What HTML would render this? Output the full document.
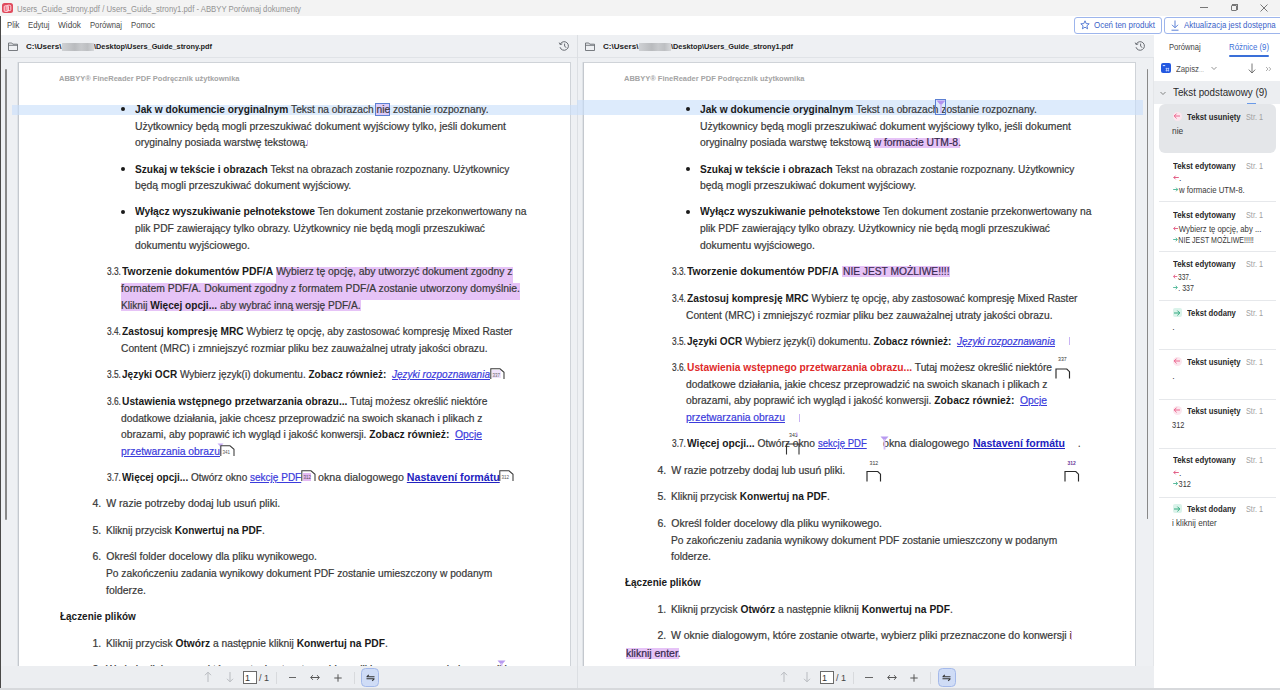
<!DOCTYPE html><html><head><meta charset="utf-8"><style>
*{margin:0;padding:0;box-sizing:border-box}
html,body{width:1280px;height:690px;overflow:hidden;background:#fff;font-family:"Liberation Sans",sans-serif}
.t{position:absolute;white-space:pre;transform-origin:0 0;-webkit-text-stroke:0.2px currentColor}
.t b{font-weight:bold;color:#1a1a1a;-webkit-text-stroke:0}
.lk{color:#3b3bdc;text-decoration:underline;text-decoration-thickness:1px;text-underline-offset:1px}
.lk2{color:#2222c0 !important;text-decoration:underline;text-decoration-thickness:1px;text-underline-offset:1px}
.red{color:#e02a2a !important}
.hl{color:#35284a}
.ar{color:#e0507a}
.ag{color:#3aae8a}
.a{position:absolute}
.sb{background:#888;border-radius:1px}
.hlb{position:absolute;background:#e6c3f7}
.pgicon{position:absolute}
.sep{position:absolute;left:1158.5px;width:117.5px;height:1px;background:#e6e8eb}
.tbi{position:absolute;font-size:11px;color:#555;line-height:11px}
</style></head><body><!-- title bar -->
<div class="a" style="left:0;top:0;width:1280px;height:16px;background:#f3f3f3"></div>
<div class="a" style="left:2.2px;top:2.5px;width:10.5px;height:10.3px;background:#e04a5c;border-radius:2.5px"></div>
<svg class="a" style="left:2px;top:2.5px" width="11" height="11" viewBox="0 0 11 11"><rect x="2.2" y="2.8" width="4.2" height="5.6" rx="1" stroke="#ffd6de" stroke-width="1" fill="#f07a8a"/><rect x="5" y="2.2" width="3.8" height="5.4" rx="1" stroke="#ffd6de" stroke-width="1" fill="none"/></svg>
<div class="a" style="left:1200px;top:7px;width:7.5px;height:1px;background:#777"></div>
<div class="a" style="left:1230.5px;top:5px;width:6px;height:6px;border:1px solid #777;border-radius:1px"></div>
<div class="a" style="left:1232px;top:4px;width:5.5px;height:5.5px;border-top:1px solid #777;border-right:1px solid #777"></div>
<svg class="a" style="left:1260px;top:4px" width="8" height="8" viewBox="0 0 8 8"><path d="M0.5 0.5L7.5 7.5M7.5 0.5L0.5 7.5" stroke="#777" stroke-width="1"/></svg>
<!-- menu bar -->
<div class="a" style="left:0;top:16px;width:1280px;height:19px;background:#fff"></div>
<div class="a" style="left:1073.5px;top:16.5px;width:88px;height:17px;border:1px solid #9db5ec;border-radius:3px;background:#fff"></div>
<svg class="a" style="left:1080px;top:20px" width="10" height="10" viewBox="0 0 10 10"><path d="M5 0.8L6.2 3.6L9.2 3.8L6.9 5.8L7.6 8.8L5 7.2L2.4 8.8L3.1 5.8L0.8 3.8L3.8 3.6Z" stroke="#4a72d0" stroke-width="0.9" fill="none" stroke-linejoin="round"/></svg>
<div class="a" style="left:1164px;top:16.5px;width:120px;height:17px;border:1px solid #9db5ec;border-radius:3px;background:#fff"></div>
<svg class="a" style="left:1171px;top:19.5px" width="8" height="11" viewBox="0 0 8 11"><path d="M4 0.5V7.5M1 4.8L4 7.8L7 4.8M0.5 10.2H7.5" stroke="#4a72d0" stroke-width="0.9" fill="none"/></svg>
<!-- left border -->
<div class="a" style="left:0;top:16px;width:1px;height:674px;background:#4a4948"></div>
<!-- pane headers -->
<div class="a" style="left:1px;top:35px;width:1153px;height:22px;background:#eef0f3"></div>
<div class="a" style="left:1px;top:57px;width:1153px;height:1px;background:#e0e3e7"></div>
<!-- doc backgrounds -->
<div class="a" style="left:1px;top:58px;width:1153px;height:632px;background:#eef0f3"></div>
<div class="a" style="left:577px;top:35px;width:1px;height:653px;background:#dcdfe3"></div>
<!-- pages -->
<div class="a" style="left:18px;top:62px;width:553px;height:610px;background:#fff;border:1px solid #cfd3d8;border-left-color:#c4c8ce;border-bottom:none;box-shadow:-1px 0 0 #dfe3e7"></div>
<div class="a" style="left:583px;top:62px;width:553px;height:610px;background:#fff;border:1px solid #cfd3d8;border-left-color:#c4c8ce;border-bottom:none;box-shadow:-1px 0 0 #dfe3e7"></div>
<!-- scrollbars -->
<div class="a sb" style="left:5.2px;top:69px;width:1.9px;height:450.5px"></div>
<div class="a sb" style="left:1146.5px;top:69px;width:1.8px;height:450px"></div>
<!-- folder icons -->
<svg class="a" style="left:8px;top:42px" width="10" height="9" viewBox="0 0 10 9"><path d="M0.5 1H3.8L4.8 2.2H9.5V8.5H0.5Z M0.5 3.3H9.5" stroke="#6a6e74" stroke-width="0.9" fill="none"/></svg>
<svg class="a" style="left:585px;top:42px" width="10" height="9" viewBox="0 0 10 9"><path d="M0.5 1H3.8L4.8 2.2H9.5V8.5H0.5Z M0.5 3.3H9.5" stroke="#6a6e74" stroke-width="0.9" fill="none"/></svg>
<div class="a" style="left:61.5px;top:42.5px;width:32px;height:8.5px;background:linear-gradient(90deg,#cfd1d4,#b9bbbe 40%,#c7c9cc 60%,#bdbfc2 80%,#d5d7da)"></div>
<div class="a" style="left:638.5px;top:42.5px;width:32px;height:8.5px;background:linear-gradient(90deg,#cfd1d4,#b9bbbe 40%,#c7c9cc 60%,#bdbfc2 80%,#d5d7da)"></div>
<!-- history icons -->
<svg class="a" style="left:558px;top:40px" width="12" height="12" viewBox="0 0 12 12"><path d="M2.2 4.2A4.3 4.3 0 1 1 2 7.2M1.2 2.6L2.2 4.6L4.3 3.9M6.6 3.6V6.3L8.4 7.6" stroke="#6a6e74" stroke-width="1" fill="none"/></svg>
<svg class="a" style="left:1134px;top:40px" width="12" height="12" viewBox="0 0 12 12"><path d="M2.2 4.2A4.3 4.3 0 1 1 2 7.2M1.2 2.6L2.2 4.6L4.3 3.9M6.6 3.6V6.3L8.4 7.6" stroke="#6a6e74" stroke-width="1" fill="none"/></svg>
<!-- highlight bands -->
<div class="a" style="left:12px;top:104.6px;width:565px;height:10px;background:rgba(200,222,250,0.62)"></div>
<div class="a" style="left:577px;top:100.2px;width:566px;height:14.5px;background:rgba(200,222,250,0.62)"></div>
<!-- purple highlights -->
<div class="hlb" style="left:375px;top:103px;width:15px;height:13px;border:1px solid #5c80d2;background:#dcccf8"></div>
<div class="hlb" style="left:276.3px;top:267px;width:236.7px;height:16px"></div>
<div class="hlb" style="left:120.5px;top:283px;width:399.5px;height:17px"></div>
<div class="hlb" style="left:120.5px;top:300px;width:240px;height:10.5px"></div>
<div class="hlb" style="left:873.7px;top:137.5px;width:86.8px;height:10.8px"></div>
<div class="hlb" style="left:842px;top:266.3px;width:108px;height:10.8px"></div>
<div class="hlb" style="left:626.2px;top:647.5px;width:52.5px;height:11.3px"></div>
<!-- sidebar -->
<div class="a" style="left:1153px;top:58px;width:1px;height:632px;background:#e4e6e9"></div>
<div class="a" style="left:1154px;top:35px;width:126px;height:655px;background:#fff"></div>
<div class="a" style="left:1229px;top:55.3px;width:40px;height:1.6px;background:#3a6fd8;border-radius:1px"></div>
<div class="a" style="left:1160.7px;top:63.3px;width:10px;height:9.8px;background:#2358e0;border-radius:2px"></div>
<svg class="a" style="left:1160.7px;top:63.3px" width="10" height="10" viewBox="0 0 10 10"><path d="M1.8 2.6h2.4" stroke="#dfe8ff" stroke-width="1"/><path d="M4.6 5.6h3.6M4.6 7.6h3.6M5.5 4.8v3.6M7.4 4.8v3.6" stroke="#c8d6ff" stroke-width="0.7"/></svg>
<svg class="a" style="left:1211px;top:66px" width="6" height="5" viewBox="0 0 6 5"><path d="M0.5 1L3 3.5L5.5 1" stroke="#888" stroke-width="0.9" fill="none"/></svg>
<svg class="a" style="left:1248px;top:63px" width="8" height="11" viewBox="0 0 8 11"><path d="M4 0.5V10M0.8 6.6L4 10L7.2 6.6" stroke="#666" stroke-width="0.9" fill="none"/></svg>
<svg class="a" style="left:1265px;top:65.5px" width="7" height="6" viewBox="0 0 7 6"><path d="M1 1L3 3L1 5M3.8 1L5.8 3L3.8 5" stroke="#9a9a9a" stroke-width="0.8" fill="none"/></svg>
<div class="a" style="left:1154px;top:81px;width:126px;height:23px;background:#eceef1"></div>
<svg class="a" style="left:1160px;top:90.5px" width="6" height="5" viewBox="0 0 6 5"><path d="M0.5 1L3 3.5L5.5 1" stroke="#777" stroke-width="0.9" fill="none"/></svg>
<div class="a" style="left:1247px;top:103px;width:9px;height:1.5px;background:#6a9ae8"></div>
<div class="a" style="left:1159px;top:104.4px;width:117px;height:48.5px;background:#e4e6e9;border-radius:6px"></div>
<div class="sep" style="top:201px"></div>
<div class="sep" style="top:250.5px"></div>
<div class="sep" style="top:299.8px"></div>
<div class="sep" style="top:349.2px"></div>
<div class="sep" style="top:398.5px"></div>
<div class="sep" style="top:447.5px"></div>
<div class="sep" style="top:496.5px"></div>
<div class="t" style="left:17.00px;top:4.00px;font-size:9.6px;line-height:9.6px;color:#949494;font-weight:normal;transform:scaleX(0.8077);-webkit-text-stroke:0;">Users_Guide_strony.pdf / Users_Guide_strony1.pdf - ABBYY Porównaj dokumenty</div>
<div class="t" style="left:6.50px;top:21.00px;font-size:9px;line-height:9px;color:#4a4a4a;font-weight:normal;transform:scaleX(0.8611);-webkit-text-stroke:0;">Plik</div>
<div class="t" style="left:27.50px;top:21.00px;font-size:9px;line-height:9px;color:#4a4a4a;font-weight:normal;transform:scaleX(0.8595);-webkit-text-stroke:0;">Edytuj</div>
<div class="t" style="left:57.50px;top:21.00px;font-size:9px;line-height:9px;color:#4a4a4a;font-weight:normal;transform:scaleX(0.9194);-webkit-text-stroke:0;">Widok</div>
<div class="t" style="left:89.50px;top:21.00px;font-size:9px;line-height:9px;color:#4a4a4a;font-weight:normal;transform:scaleX(0.8526);-webkit-text-stroke:0;">Porównaj</div>
<div class="t" style="left:131.00px;top:21.00px;font-size:9px;line-height:9px;color:#4a4a4a;font-weight:normal;transform:scaleX(0.8567);-webkit-text-stroke:0;">Pomoc</div>
<div class="t" style="left:1094.00px;top:21.00px;font-size:9px;line-height:9px;color:#3a62c8;font-weight:normal;transform:scaleX(0.8835);-webkit-text-stroke:0;">Oceń ten produkt</div>
<div class="t" style="left:1184.00px;top:21.00px;font-size:9px;line-height:9px;color:#3a62c8;font-weight:normal;transform:scaleX(0.8812);-webkit-text-stroke:0;">Aktualizacja jest dostępna</div>
<div class="t" style="left:25.50px;top:43.00px;font-size:8px;line-height:8px;color:#222;font-weight:bold;transform:scaleX(1.0107);-webkit-text-stroke:0;">C:\Users\</div>
<div class="t" style="left:94.00px;top:43.00px;font-size:8px;line-height:8px;color:#222;font-weight:bold;transform:scaleX(0.9195);-webkit-text-stroke:0;">\Desktop\Users_Guide_strony.pdf</div>
<div class="t" style="left:602.60px;top:43.00px;font-size:8px;line-height:8px;color:#222;font-weight:bold;transform:scaleX(1.0078);-webkit-text-stroke:0;">C:\Users\</div>
<div class="t" style="left:671.00px;top:43.00px;font-size:8px;line-height:8px;color:#222;font-weight:bold;transform:scaleX(0.9147);-webkit-text-stroke:0;">\Desktop\Users_Guide_strony1.pdf</div>
<div class="t" style="left:59.00px;top:75.00px;font-size:8px;line-height:8px;color:#a4a4a4;font-weight:bold;transform:scaleX(0.9371);-webkit-text-stroke:0;">ABBYY® FineReader PDF Podręcznik użytkownika</div>
<div class="t" style="left:134.50px;top:104.00px;font-size:10.5px;line-height:10.5px;color:#383838;font-weight:normal;transform:scaleX(0.9701);"><b>Jak w dokumencie oryginalnym</b> Tekst na obrazach nie zostanie rozpoznany.</div>
<div class="t" style="left:134.50px;top:121.00px;font-size:10.5px;line-height:10.5px;color:#383838;font-weight:normal;transform:scaleX(0.9902);">Użytkownicy będą mogli przeszukiwać dokument wyjściowy tylko, jeśli dokument</div>
<div class="t" style="left:134.50px;top:137.00px;font-size:10.5px;line-height:10.5px;color:#383838;font-weight:normal;transform:scaleX(0.9815);">oryginalny posiada warstwę tekstową.</div>
<div class="t" style="left:134.50px;top:164.00px;font-size:10.5px;line-height:10.5px;color:#383838;font-weight:normal;transform:scaleX(0.9638);"><b>Szukaj w tekście i obrazach</b> Tekst na obrazach zostanie rozpoznany. Użytkownicy</div>
<div class="t" style="left:134.50px;top:180.00px;font-size:10.5px;line-height:10.5px;color:#383838;font-weight:normal;transform:scaleX(0.9917);">będą mogli przeszukiwać dokument wyjściowy.</div>
<div class="t" style="left:134.50px;top:206.00px;font-size:10.5px;line-height:10.5px;color:#383838;font-weight:normal;transform:scaleX(0.9802);"><b>Wyłącz wyszukiwanie pełnotekstowe</b> Ten dokument zostanie przekonwertowany na</div>
<div class="t" style="left:134.50px;top:223.00px;font-size:10.5px;line-height:10.5px;color:#383838;font-weight:normal;transform:scaleX(0.9806);">plik PDF zawierający tylko obrazy. Użytkownicy nie będą mogli przeszukiwać</div>
<div class="t" style="left:134.50px;top:240.00px;font-size:10.5px;line-height:10.5px;color:#383838;font-weight:normal;transform:scaleX(0.9851);">dokumentu wyjściowego.</div>
<div class="t" style="left:107.00px;top:266.00px;font-size:10.5px;line-height:10.5px;color:#383838;font-weight:normal;transform:scaleX(0.7936);">3.3.</div>
<div class="t" style="left:122.00px;top:266.00px;font-size:10.5px;line-height:10.5px;color:#383838;font-weight:normal;transform:scaleX(0.9907);"><b>Tworzenie dokumentów PDF/A</b> Wybierz tę opcję, aby utworzyć dokument zgodny z</div>
<div class="t" style="left:120.50px;top:283.00px;font-size:10.5px;line-height:10.5px;color:#383838;font-weight:normal;transform:scaleX(0.9895);">formatem PDF/A. Dokument zgodny z formatem PDF/A zostanie utworzony domyślnie.</div>
<div class="t" style="left:120.50px;top:300.00px;font-size:10.5px;line-height:10.5px;color:#383838;font-weight:normal;transform:scaleX(0.9638);">Kliknij <b>Więcej opcji...</b> aby wybrać inną wersję PDF/A.</div>
<div class="t" style="left:107.00px;top:326.00px;font-size:10.5px;line-height:10.5px;color:#383838;font-weight:normal;transform:scaleX(0.7936);">3.4.</div>
<div class="t" style="left:122.00px;top:326.00px;font-size:10.5px;line-height:10.5px;color:#383838;font-weight:normal;transform:scaleX(0.9700);"><b>Zastosuj kompresję MRC</b> Wybierz tę opcję, aby zastosować kompresję Mixed Raster</div>
<div class="t" style="left:120.50px;top:343.00px;font-size:10.5px;line-height:10.5px;color:#383838;font-weight:normal;transform:scaleX(0.9768);">Content (MRC) i zmniejszyć rozmiar pliku bez zauważalnej utraty jakości obrazu.</div>
<div class="t" style="left:107.00px;top:369.00px;font-size:10.5px;line-height:10.5px;color:#383838;font-weight:normal;transform:scaleX(0.7936);">3.5.</div>
<div class="t" style="left:122.00px;top:369.00px;font-size:10.5px;line-height:10.5px;color:#383838;font-weight:normal;transform:scaleX(0.9542);"><b>Języki OCR</b> Wybierz język(i) dokumentu. <b>Zobacz również:</b>  <i class="lk">Języki rozpoznawania</i></div>
<div class="t" style="left:107.00px;top:396.00px;font-size:10.5px;line-height:10.5px;color:#383838;font-weight:normal;transform:scaleX(0.7936);">3.6.</div>
<div class="t" style="left:122.00px;top:396.00px;font-size:10.5px;line-height:10.5px;color:#383838;font-weight:normal;transform:scaleX(0.9756);"><b>Ustawienia wstępnego przetwarzania obrazu...</b> Tutaj możesz określić niektóre</div>
<div class="t" style="left:120.50px;top:413.00px;font-size:10.5px;line-height:10.5px;color:#383838;font-weight:normal;transform:scaleX(0.9785);">dodatkowe działania, jakie chcesz przeprowadzić na swoich skanach i plikach z</div>
<div class="t" style="left:120.50px;top:429.00px;font-size:10.5px;line-height:10.5px;color:#383838;font-weight:normal;transform:scaleX(0.9803);">obrazami, aby poprawić ich wygląd i jakość konwersji. <b>Zobacz również:</b>  <span class="lk">Opcje</span></div>
<div class="t" style="left:120.50px;top:446.00px;font-size:10.5px;line-height:10.5px;color:#383838;font-weight:normal;transform:scaleX(0.9861);"><span class="lk">przetwarzania obrazu</span></div>
<div class="t" style="left:107.00px;top:472.00px;font-size:10.5px;line-height:10.5px;color:#383838;font-weight:normal;transform:scaleX(0.7936);">3.7.</div>
<div class="t" style="left:122.00px;top:472.00px;font-size:10.5px;line-height:10.5px;color:#383838;font-weight:normal;transform:scaleX(0.9544);"><b>Więcej opcji...</b> Otwórz okno <span class="lk">sekcję PDF</span></div>
<div class="t" style="left:317.50px;top:472.00px;font-size:10.5px;line-height:10.5px;color:#383838;font-weight:normal;transform:scaleX(1.0143);">okna dialogowego <b class="lk2">Nastavení formátu</b></div>
<div class="t" style="left:92.50px;top:498.00px;font-size:10.5px;line-height:10.5px;color:#383838;font-weight:normal;">4.</div>
<div class="t" style="left:106.25px;top:498.00px;font-size:10.5px;line-height:10.5px;color:#383838;font-weight:normal;">W razie potrzeby dodaj lub usuń pliki.</div>
<div class="t" style="left:92.50px;top:525.00px;font-size:10.5px;line-height:10.5px;color:#383838;font-weight:normal;">5.</div>
<div class="t" style="left:106.25px;top:525.00px;font-size:10.5px;line-height:10.5px;color:#383838;font-weight:normal;transform:scaleX(0.9649);">Kliknij przycisk <b>Konwertuj na PDF</b>.</div>
<div class="t" style="left:92.50px;top:551.00px;font-size:10.5px;line-height:10.5px;color:#383838;font-weight:normal;">6.</div>
<div class="t" style="left:106.25px;top:551.00px;font-size:10.5px;line-height:10.5px;color:#383838;font-weight:normal;">Określ folder docelowy dla pliku wynikowego.</div>
<div class="t" style="left:106.25px;top:568.00px;font-size:10.5px;line-height:10.5px;color:#383838;font-weight:normal;transform:scaleX(0.9732);">Po zakończeniu zadania wynikowy dokument PDF zostanie umieszczony w podanym</div>
<div class="t" style="left:106.25px;top:585.00px;font-size:10.5px;line-height:10.5px;color:#383838;font-weight:normal;transform:scaleX(0.9930);">folderze.</div>
<div class="t" style="left:60.00px;top:611.00px;font-size:10.5px;line-height:10.5px;color:#383838;font-weight:normal;transform:scaleX(0.9474);"><b>Łączenie plików</b></div>
<div class="t" style="left:92.50px;top:638.00px;font-size:10.5px;line-height:10.5px;color:#383838;font-weight:normal;">1.</div>
<div class="t" style="left:106.25px;top:638.00px;font-size:10.5px;line-height:10.5px;color:#383838;font-weight:normal;transform:scaleX(0.9754);">Kliknij przycisk <b>Otwórz</b> a następnie kliknij <b>Konwertuj na PDF</b>.</div>
<div class="t" style="left:92.50px;top:664.00px;font-size:10.5px;line-height:10.5px;color:#383838;font-weight:normal;">2.</div>
<div class="t" style="left:106.25px;top:664.00px;font-size:10.5px;line-height:10.5px;color:#383838;font-weight:normal;transform:scaleX(0.9967);">W oknie dialogowym, które zostanie otwarte, wybierz pliki przeznaczone do konwersji i</div>
<div class="t" style="left:624.00px;top:75.00px;font-size:8px;line-height:8px;color:#a4a4a4;font-weight:bold;transform:scaleX(0.9371);-webkit-text-stroke:0;">ABBYY® FineReader PDF Podręcznik użytkownika</div>
<div class="t" style="left:699.50px;top:104.00px;font-size:10.5px;line-height:10.5px;color:#383838;font-weight:normal;transform:scaleX(0.9692);"><b>Jak w dokumencie oryginalnym</b> Tekst na obrazach zostanie rozpoznany.</div>
<div class="t" style="left:699.50px;top:121.00px;font-size:10.5px;line-height:10.5px;color:#383838;font-weight:normal;transform:scaleX(0.9902);">Użytkownicy będą mogli przeszukiwać dokument wyjściowy tylko, jeśli dokument</div>
<div class="t" style="left:699.50px;top:137.00px;font-size:10.5px;line-height:10.5px;color:#383838;font-weight:normal;transform:scaleX(0.9851);">oryginalny posiada warstwę tekstową <span class="hl">w formacie UTM-8</span>.</div>
<div class="t" style="left:699.50px;top:164.00px;font-size:10.5px;line-height:10.5px;color:#383838;font-weight:normal;transform:scaleX(0.9638);"><b>Szukaj w tekście i obrazach</b> Tekst na obrazach zostanie rozpoznany. Użytkownicy</div>
<div class="t" style="left:699.50px;top:180.00px;font-size:10.5px;line-height:10.5px;color:#383838;font-weight:normal;transform:scaleX(0.9917);">będą mogli przeszukiwać dokument wyjściowy.</div>
<div class="t" style="left:699.50px;top:206.00px;font-size:10.5px;line-height:10.5px;color:#383838;font-weight:normal;transform:scaleX(0.9802);"><b>Wyłącz wyszukiwanie pełnotekstowe</b> Ten dokument zostanie przekonwertowany na</div>
<div class="t" style="left:699.50px;top:223.00px;font-size:10.5px;line-height:10.5px;color:#383838;font-weight:normal;transform:scaleX(0.9806);">plik PDF zawierający tylko obrazy. Użytkownicy nie będą mogli przeszukiwać</div>
<div class="t" style="left:699.50px;top:240.00px;font-size:10.5px;line-height:10.5px;color:#383838;font-weight:normal;transform:scaleX(0.9851);">dokumentu wyjściowego.</div>
<div class="t" style="left:672.00px;top:266.00px;font-size:10.5px;line-height:10.5px;color:#383838;font-weight:normal;transform:scaleX(0.7936);">3.3.</div>
<div class="t" style="left:687.00px;top:266.00px;font-size:10.5px;line-height:10.5px;color:#383838;font-weight:normal;transform:scaleX(0.9941);"><b>Tworzenie dokumentów PDF/A</b></div>
<div class="t" style="left:842.50px;top:267.00px;font-size:10.3px;line-height:10.3px;color:#3a2a50;font-weight:normal;transform:scaleX(0.9919);">NIE JEST MOŻLIWE!!!!</div>
<div class="t" style="left:672.00px;top:293.00px;font-size:10.5px;line-height:10.5px;color:#383838;font-weight:normal;transform:scaleX(0.7936);">3.4.</div>
<div class="t" style="left:687.00px;top:293.00px;font-size:10.5px;line-height:10.5px;color:#383838;font-weight:normal;transform:scaleX(0.9700);"><b>Zastosuj kompresję MRC</b> Wybierz tę opcję, aby zastosować kompresję Mixed Raster</div>
<div class="t" style="left:685.50px;top:310.00px;font-size:10.5px;line-height:10.5px;color:#383838;font-weight:normal;transform:scaleX(0.9768);">Content (MRC) i zmniejszyć rozmiar pliku bez zauważalnej utraty jakości obrazu.</div>
<div class="t" style="left:672.00px;top:336.00px;font-size:10.5px;line-height:10.5px;color:#383838;font-weight:normal;transform:scaleX(0.7936);">3.5.</div>
<div class="t" style="left:687.00px;top:336.00px;font-size:10.5px;line-height:10.5px;color:#383838;font-weight:normal;transform:scaleX(0.9542);"><b>Języki OCR</b> Wybierz język(i) dokumentu. <b>Zobacz również:</b>  <i class="lk">Języki rozpoznawania</i></div>
<div class="t" style="left:672.00px;top:362.00px;font-size:10.5px;line-height:10.5px;color:#383838;font-weight:normal;transform:scaleX(0.7936);">3.6.</div>
<div class="t" style="left:687.00px;top:362.00px;font-size:10.5px;line-height:10.5px;color:#383838;font-weight:normal;transform:scaleX(0.9743);"><b class="red">Ustawienia wstępnego przetwarzania obrazu...</b> Tutaj możesz określić niektóre</div>
<div class="t" style="left:685.50px;top:379.00px;font-size:10.5px;line-height:10.5px;color:#383838;font-weight:normal;transform:scaleX(0.9785);">dodatkowe działania, jakie chcesz przeprowadzić na swoich skanach i plikach z</div>
<div class="t" style="left:685.50px;top:395.00px;font-size:10.5px;line-height:10.5px;color:#383838;font-weight:normal;transform:scaleX(0.9803);">obrazami, aby poprawić ich wygląd i jakość konwersji. <b>Zobacz również:</b>  <span class="lk">Opcje</span></div>
<div class="t" style="left:685.50px;top:412.00px;font-size:10.5px;line-height:10.5px;color:#383838;font-weight:normal;transform:scaleX(0.9861);"><span class="lk">przetwarzania obrazu</span></div>
<div class="t" style="left:672.00px;top:438.00px;font-size:10.5px;line-height:10.5px;color:#383838;font-weight:normal;transform:scaleX(0.7936);">3.7.</div>
<div class="t" style="left:687.00px;top:438.00px;font-size:10.5px;line-height:10.5px;color:#383838;font-weight:normal;transform:scaleX(0.9756);"><b>Więcej opcji...</b> Otwórz okno</div>
<div class="t" style="left:817.50px;top:438.00px;font-size:10.5px;line-height:10.5px;color:#383838;font-weight:normal;transform:scaleX(0.9080);"><span class="lk">sekcję PDF</span></div>
<div class="t" style="left:882.50px;top:438.00px;font-size:10.5px;line-height:10.5px;color:#383838;font-weight:normal;transform:scaleX(1.0188);">okna dialogowego</div>
<div class="t" style="left:972.50px;top:438.00px;font-size:10.5px;line-height:10.5px;color:#383838;font-weight:normal;transform:scaleX(1.0043);"><b class="lk2">Nastavení formátu</b></div>
<div class="t" style="left:1077.50px;top:438.00px;font-size:10.5px;line-height:10.5px;color:#383838;font-weight:normal;transform:scaleX(0.8556);">.</div>
<div class="t" style="left:657.50px;top:465.00px;font-size:10.5px;line-height:10.5px;color:#383838;font-weight:normal;">4.</div>
<div class="t" style="left:671.25px;top:465.00px;font-size:10.5px;line-height:10.5px;color:#383838;font-weight:normal;">W razie potrzeby dodaj lub usuń pliki.</div>
<div class="t" style="left:657.50px;top:491.00px;font-size:10.5px;line-height:10.5px;color:#383838;font-weight:normal;">5.</div>
<div class="t" style="left:671.25px;top:491.00px;font-size:10.5px;line-height:10.5px;color:#383838;font-weight:normal;transform:scaleX(0.9649);">Kliknij przycisk <b>Konwertuj na PDF</b>.</div>
<div class="t" style="left:657.50px;top:518.00px;font-size:10.5px;line-height:10.5px;color:#383838;font-weight:normal;">6.</div>
<div class="t" style="left:671.25px;top:518.00px;font-size:10.5px;line-height:10.5px;color:#383838;font-weight:normal;">Określ folder docelowy dla pliku wynikowego.</div>
<div class="t" style="left:671.25px;top:535.00px;font-size:10.5px;line-height:10.5px;color:#383838;font-weight:normal;transform:scaleX(0.9732);">Po zakończeniu zadania wynikowy dokument PDF zostanie umieszczony w podanym</div>
<div class="t" style="left:671.25px;top:551.00px;font-size:10.5px;line-height:10.5px;color:#383838;font-weight:normal;transform:scaleX(0.9930);">folderze.</div>
<div class="t" style="left:625.00px;top:577.00px;font-size:10.5px;line-height:10.5px;color:#383838;font-weight:normal;transform:scaleX(0.9474);"><b>Łączenie plików</b></div>
<div class="t" style="left:657.50px;top:604.00px;font-size:10.5px;line-height:10.5px;color:#383838;font-weight:normal;">1.</div>
<div class="t" style="left:671.25px;top:604.00px;font-size:10.5px;line-height:10.5px;color:#383838;font-weight:normal;transform:scaleX(0.9754);">Kliknij przycisk <b>Otwórz</b> a następnie kliknij <b>Konwertuj na PDF</b>.</div>
<div class="t" style="left:657.50px;top:630.00px;font-size:10.5px;line-height:10.5px;color:#383838;font-weight:normal;">2.</div>
<div class="t" style="left:671.25px;top:630.00px;font-size:10.5px;line-height:10.5px;color:#383838;font-weight:normal;transform:scaleX(0.9967);">W oknie dialogowym, które zostanie otwarte, wybierz pliki przeznaczone do konwersji i</div>
<div class="t" style="left:626.25px;top:648.00px;font-size:10.5px;line-height:10.5px;color:#383838;font-weight:normal;transform:scaleX(0.9977);"><span class="hl">kliknij enter</span>.</div>
<div class="t" style="left:1168.80px;top:43.00px;font-size:9px;line-height:9px;color:#444;font-weight:normal;transform:scaleX(0.8446);-webkit-text-stroke:0;">Porównaj</div>
<div class="t" style="left:1229.00px;top:43.00px;font-size:9px;line-height:9px;color:#3a6fd8;font-weight:normal;transform:scaleX(0.8693);-webkit-text-stroke:0;">Różnice (9)</div>
<div class="t" style="left:1175.50px;top:64.00px;font-size:9.6px;line-height:9.6px;color:#505050;font-weight:normal;transform:scaleX(0.8137);-webkit-text-stroke:0;">Zapisz</div>
<div class="t" style="left:1198.80px;top:67.00px;font-size:6px;line-height:6px;color:#888;font-weight:normal;transform:scaleX(0.9969);-webkit-text-stroke:0;">...</div>
<div class="t" style="left:1173.00px;top:87.00px;font-size:11px;line-height:11px;color:#2a2a2a;font-weight:normal;transform:scaleX(0.8925);-webkit-text-stroke:0;">Tekst podstawowy (9)</div>
<div class="t" style="left:1187.40px;top:113.00px;font-size:8.6px;line-height:8.6px;color:#2a2a2a;font-weight:bold;transform:scaleX(0.9001);-webkit-text-stroke:0;">Tekst usunięty</div>
<div class="t" style="left:1245.80px;top:113.00px;font-size:8.6px;line-height:8.6px;color:#a0a0a0;font-weight:normal;transform:scaleX(0.8474);-webkit-text-stroke:0;">Str. 1</div>
<div class="t" style="left:1172.30px;top:127.00px;font-size:8.6px;line-height:8.6px;color:#383838;font-weight:normal;transform:scaleX(0.9766);-webkit-text-stroke:0;">nie</div>
<div class="t" style="left:1172.60px;top:162.00px;font-size:8.6px;line-height:8.6px;color:#2a2a2a;font-weight:bold;transform:scaleX(0.9122);-webkit-text-stroke:0;">Tekst edytowany</div>
<div class="t" style="left:1245.80px;top:162.00px;font-size:8.6px;line-height:8.6px;color:#a0a0a0;font-weight:normal;transform:scaleX(0.8474);-webkit-text-stroke:0;">Str. 1</div>
<div class="t" style="left:1172.60px;top:174.00px;font-size:8.6px;line-height:8.6px;color:#383838;font-weight:normal;-webkit-text-stroke:0;"><svg width="6" height="5" viewBox="0 0 6 5" style="vertical-align:1px;margin-right:0.5px"><path d="M5.8 2.5H0.8M2.6 0.7L0.8 2.5L2.6 4.3" stroke="#e0507a" stroke-width="0.9" fill="none"/></svg>.</div>
<div class="t" style="left:1172.60px;top:186.00px;font-size:8.6px;line-height:8.6px;color:#383838;font-weight:normal;transform:scaleX(0.9067);-webkit-text-stroke:0;"><svg width="6" height="5" viewBox="0 0 6 5" style="vertical-align:1px;margin-right:0.5px"><path d="M0.2 2.5H5.2M3.4 0.7L5.2 2.5L3.4 4.3" stroke="#3aae8a" stroke-width="0.9" fill="none"/></svg>w formacie UTM-8.</div>
<div class="t" style="left:1172.60px;top:211.00px;font-size:8.6px;line-height:8.6px;color:#2a2a2a;font-weight:bold;transform:scaleX(0.9122);-webkit-text-stroke:0;">Tekst edytowany</div>
<div class="t" style="left:1245.80px;top:211.00px;font-size:8.6px;line-height:8.6px;color:#a0a0a0;font-weight:normal;transform:scaleX(0.8474);-webkit-text-stroke:0;">Str. 1</div>
<div class="t" style="left:1172.60px;top:225.00px;font-size:8.6px;line-height:8.6px;color:#383838;font-weight:normal;transform:scaleX(0.9007);-webkit-text-stroke:0;"><svg width="6" height="5" viewBox="0 0 6 5" style="vertical-align:1px;margin-right:0.5px"><path d="M5.8 2.5H0.8M2.6 0.7L0.8 2.5L2.6 4.3" stroke="#e0507a" stroke-width="0.9" fill="none"/></svg>Wybierz tę opcję, aby ...</div>
<div class="t" style="left:1172.60px;top:236.00px;font-size:8.6px;line-height:8.6px;color:#383838;font-weight:normal;transform:scaleX(0.8203);-webkit-text-stroke:0;"><svg width="6" height="5" viewBox="0 0 6 5" style="vertical-align:1px;margin-right:0.5px"><path d="M0.2 2.5H5.2M3.4 0.7L5.2 2.5L3.4 4.3" stroke="#3aae8a" stroke-width="0.9" fill="none"/></svg>NIE JEST MOŻLIWE!!!!!</div>
<div class="t" style="left:1172.60px;top:260.00px;font-size:8.6px;line-height:8.6px;color:#2a2a2a;font-weight:bold;transform:scaleX(0.9122);-webkit-text-stroke:0;">Tekst edytowany</div>
<div class="t" style="left:1245.80px;top:260.00px;font-size:8.6px;line-height:8.6px;color:#a0a0a0;font-weight:normal;transform:scaleX(0.8474);-webkit-text-stroke:0;">Str. 1</div>
<div class="t" style="left:1172.60px;top:273.00px;font-size:8.6px;line-height:8.6px;color:#383838;font-weight:normal;transform:scaleX(0.7704);-webkit-text-stroke:0;"><svg width="6" height="5" viewBox="0 0 6 5" style="vertical-align:1px;margin-right:0.5px"><path d="M5.8 2.5H0.8M2.6 0.7L0.8 2.5L2.6 4.3" stroke="#e0507a" stroke-width="0.9" fill="none"/></svg>337.</div>
<div class="t" style="left:1172.60px;top:284.00px;font-size:8.6px;line-height:8.6px;color:#383838;font-weight:normal;transform:scaleX(0.8156);-webkit-text-stroke:0;"><svg width="6" height="5" viewBox="0 0 6 5" style="vertical-align:1px;margin-right:0.5px"><path d="M0.2 2.5H5.2M3.4 0.7L5.2 2.5L3.4 4.3" stroke="#3aae8a" stroke-width="0.9" fill="none"/></svg>. 337</div>
<div class="t" style="left:1187.40px;top:309.00px;font-size:8.6px;line-height:8.6px;color:#2a2a2a;font-weight:bold;transform:scaleX(0.8929);-webkit-text-stroke:0;">Tekst dodany</div>
<div class="t" style="left:1245.80px;top:309.00px;font-size:8.6px;line-height:8.6px;color:#a0a0a0;font-weight:normal;transform:scaleX(0.8474);-webkit-text-stroke:0;">Str. 1</div>
<div class="t" style="left:1172.30px;top:323.00px;font-size:8.6px;line-height:8.6px;color:#383838;font-weight:normal;-webkit-text-stroke:0;">.</div>
<div class="t" style="left:1187.40px;top:358.00px;font-size:8.6px;line-height:8.6px;color:#2a2a2a;font-weight:bold;transform:scaleX(0.9001);-webkit-text-stroke:0;">Tekst usunięty</div>
<div class="t" style="left:1245.80px;top:358.00px;font-size:8.6px;line-height:8.6px;color:#a0a0a0;font-weight:normal;transform:scaleX(0.8474);-webkit-text-stroke:0;">Str. 1</div>
<div class="t" style="left:1172.30px;top:372.00px;font-size:8.6px;line-height:8.6px;color:#383838;font-weight:normal;-webkit-text-stroke:0;">.</div>
<div class="t" style="left:1187.40px;top:407.00px;font-size:8.6px;line-height:8.6px;color:#2a2a2a;font-weight:bold;transform:scaleX(0.9001);-webkit-text-stroke:0;">Tekst usunięty</div>
<div class="t" style="left:1245.80px;top:407.00px;font-size:8.6px;line-height:8.6px;color:#a0a0a0;font-weight:normal;transform:scaleX(0.8474);-webkit-text-stroke:0;">Str. 1</div>
<div class="t" style="left:1172.30px;top:421.00px;font-size:8.6px;line-height:8.6px;color:#383838;font-weight:normal;transform:scaleX(0.8645);-webkit-text-stroke:0;">312</div>
<div class="t" style="left:1172.60px;top:456.00px;font-size:8.6px;line-height:8.6px;color:#2a2a2a;font-weight:bold;transform:scaleX(0.9122);-webkit-text-stroke:0;">Tekst edytowany</div>
<div class="t" style="left:1245.80px;top:456.00px;font-size:8.6px;line-height:8.6px;color:#a0a0a0;font-weight:normal;transform:scaleX(0.8474);-webkit-text-stroke:0;">Str. 1</div>
<div class="t" style="left:1172.60px;top:469.00px;font-size:8.6px;line-height:8.6px;color:#383838;font-weight:normal;-webkit-text-stroke:0;"><svg width="6" height="5" viewBox="0 0 6 5" style="vertical-align:1px;margin-right:0.5px"><path d="M5.8 2.5H0.8M2.6 0.7L0.8 2.5L2.6 4.3" stroke="#e0507a" stroke-width="0.9" fill="none"/></svg>.</div>
<div class="t" style="left:1172.60px;top:480.00px;font-size:8.6px;line-height:8.6px;color:#383838;font-weight:normal;transform:scaleX(0.8588);-webkit-text-stroke:0;"><svg width="6" height="5" viewBox="0 0 6 5" style="vertical-align:1px;margin-right:0.5px"><path d="M0.2 2.5H5.2M3.4 0.7L5.2 2.5L3.4 4.3" stroke="#3aae8a" stroke-width="0.9" fill="none"/></svg>312</div>
<div class="t" style="left:1187.40px;top:505.00px;font-size:8.6px;line-height:8.6px;color:#2a2a2a;font-weight:bold;transform:scaleX(0.8929);-webkit-text-stroke:0;">Tekst dodany</div>
<div class="t" style="left:1245.80px;top:505.00px;font-size:8.6px;line-height:8.6px;color:#a0a0a0;font-weight:normal;transform:scaleX(0.8474);-webkit-text-stroke:0;">Str. 1</div>
<div class="t" style="left:1172.30px;top:519.00px;font-size:8.6px;line-height:8.6px;color:#383838;font-weight:normal;transform:scaleX(0.9451);-webkit-text-stroke:0;">i kliknij enter</div>
<!-- right marker box -->
<div class="a" style="left:935px;top:98.8px;width:11.3px;height:16.7px;border:1px solid #5c80d2"></div>
<svg class="a" style="left:936px;top:99.8px" width="10" height="14" viewBox="0 0 10 14"><path d="M0.5 0.5H9.5L5 5.5Z" fill="#b294f0"/><rect x="4.2" y="4" width="1.6" height="9" fill="#cdb6f5"/></svg>
<svg class="a" style="left:879.5px;top:436px" width="9" height="14" viewBox="0 0 9 14"><path d="M0.5 0.5H8.5L4.5 5Z" fill="#b89af0"/><rect x="3.6" y="3" width="1.8" height="10.5" fill="#d2bcf6"/></svg>
<svg class="a" style="left:216.5px;top:443px" width="7" height="12" viewBox="0 0 7 12"><path d="M0.5 0.5H6.5L3.5 4Z" fill="#c6acf4"/><rect x="2.8" y="2" width="1.4" height="9" fill="#dccaf8"/></svg>
<div class="a" style="left:306.5px;top:140px;width:1.5px;height:6px;background:#c9b4f4"></div>
<svg class="a" style="left:497px;top:659.5px" width="9" height="8" viewBox="0 0 9 8"><path d="M0.5 0.5H8.5L4.5 5Z" fill="#b89af0"/><rect x="3.6" y="3" width="1.8" height="5" fill="#d2bcf6"/></svg>
<div class="a" style="left:798.8px;top:414px;width:1.4px;height:8px;background:#c9b4f4"></div>
<div class="a" style="left:1068.8px;top:337px;width:1.4px;height:8px;background:#c9b4f4"></div>
<div class="a" style="left:1071px;top:631px;width:1.4px;height:9px;background:#c9b4f4"></div>
<!-- left page link icons -->
<svg class="a" style="left:490px;top:367.5px" width="16" height="12" viewBox="0 0 16 12"><rect x="2" y="2" width="9" height="8" fill="#f0e4fb"/><path d="M0.8 11V0.8H10L14 4.3V11" stroke="#3a3a3a" stroke-width="1.05" fill="none"/><text x="2.6" y="9.3" font-size="4.5" fill="#666" font-family="Liberation Sans">337</text></svg>
<svg class="a" style="left:219.5px;top:444.5px" width="16" height="12" viewBox="0 0 16 12"><path d="M0.8 11V0.8H10L14 4.3V11" stroke="#3a3a3a" stroke-width="1.05" fill="none"/><text x="2.6" y="9.3" font-size="4.5" fill="#555" font-family="Liberation Sans">341</text></svg>
<svg class="a" style="left:300.5px;top:470px" width="16" height="12" viewBox="0 0 16 12"><rect x="2" y="3" width="8" height="8" fill="#e4b8f4"/><path d="M0.8 11V0.8H10L14 4.3V11" stroke="#3a3a3a" stroke-width="1.05" fill="none"/><text x="2.6" y="9.3" font-size="4.5" fill="#555" font-family="Liberation Sans">312</text></svg>
<svg class="a" style="left:499px;top:470px" width="16" height="12" viewBox="0 0 16 12"><path d="M0.8 11V0.8H10L14 4.3V11" stroke="#3a3a3a" stroke-width="1.05" fill="none"/><text x="2.6" y="9.3" font-size="4.5" fill="#555" font-family="Liberation Sans">312</text></svg>
<!-- right page icons -->
<svg class="a" style="left:1055px;top:355px" width="16" height="24" viewBox="0 0 16 24"><text x="3" y="6" font-size="5.2" fill="#333" font-family="Liberation Sans">337</text><path d="M1 23.5V14H11.8L14.5 16.7V23.5" stroke="#2a2a2a" stroke-width="1.15" fill="none"/></svg>
<svg class="a" style="left:866px;top:458px" width="16" height="24" viewBox="0 0 16 24"><text x="3.5" y="6.5" font-size="5.2" fill="#333" font-family="Liberation Sans">312</text><path d="M1 23.5V13.5H11.8L14.5 16.2V23.5" stroke="#2a2a2a" stroke-width="1.15" fill="none"/></svg>
<svg class="a" style="left:1064px;top:458px" width="16" height="24" viewBox="0 0 16 24"><text x="3.5" y="6.5" font-size="5" fill="#6a3a9a" font-weight="bold" font-family="Liberation Sans">312</text><path d="M1 23.5V13.5H11.8L14.5 16.2V23.5" stroke="#2a2a2a" stroke-width="1.15" fill="none"/></svg>
<svg class="a" style="left:784.5px;top:431px" width="16" height="24" viewBox="0 0 16 24"><text x="4" y="6" font-size="5.2" fill="#333" font-family="Liberation Sans">341</text><path d="M11.5 1.5L12.5 5" stroke="#c8b0f4" stroke-width="1.4"/><path d="M1.5 23.5V13H14V23.5" stroke="#333" stroke-width="1.1" fill="none"/></svg>
<!-- card icons -->
<div class="a" style="left:1172.5px;top:111.5px;width:9px;height:9px;background:#fce6ee;border-radius:4.5px"></div>
<svg class="a" style="left:1173px;top:112px" width="8" height="8" viewBox="0 0 8 8"><path d="M7 4H1.2M3.6 1.6L1.2 4L3.6 6.4" stroke="#ea5a84" stroke-width="0.9" fill="none"/></svg>
<div class="a" style="left:1172.5px;top:308px;width:9px;height:9px;background:#daf3ea;border-radius:2px"></div>
<svg class="a" style="left:1173px;top:308.5px" width="8" height="8" viewBox="0 0 8 8"><path d="M1 4H6.8M4.4 1.6L6.8 4L4.4 6.4" stroke="#33aa80" stroke-width="1" fill="none"/></svg>
<div class="a" style="left:1172.5px;top:356.5px;width:9px;height:9px;background:#fce6ee;border-radius:4.5px"></div>
<svg class="a" style="left:1173px;top:357px" width="8" height="8" viewBox="0 0 8 8"><path d="M7 4H1.2M3.6 1.6L1.2 4L3.6 6.4" stroke="#ea5a84" stroke-width="0.9" fill="none"/></svg>
<div class="a" style="left:1172.5px;top:405.5px;width:9px;height:9px;background:#fce6ee;border-radius:4.5px"></div>
<svg class="a" style="left:1173px;top:406px" width="8" height="8" viewBox="0 0 8 8"><path d="M7 4H1.2M3.6 1.6L1.2 4L3.6 6.4" stroke="#ea5a84" stroke-width="0.9" fill="none"/></svg>
<div class="a" style="left:1172.5px;top:504px;width:9px;height:9px;background:#daf3ea;border-radius:2px"></div>
<svg class="a" style="left:1173px;top:504.5px" width="8" height="8" viewBox="0 0 8 8"><path d="M1 4H6.8M4.4 1.6L6.8 4L4.4 6.4" stroke="#33aa80" stroke-width="1" fill="none"/></svg>
<!-- toolbars -->
<div class="a" style="left:1px;top:666px;width:576px;height:22px;background:#eceef1"></div>
<div class="a" style="left:578px;top:666px;width:576px;height:22px;background:#eceef1"></div>
<div class="a" style="left:0;top:688px;width:1280px;height:2px;background:#d7d9dc"></div>
<!-- bullets -->
<div class="a" style="left:120.7px;top:107.4px;width:4px;height:4px;border-radius:50%;background:#1a1a1a"></div>
<div class="a" style="left:120.7px;top:167.15px;width:4px;height:4px;border-radius:50%;background:#1a1a1a"></div>
<div class="a" style="left:120.7px;top:209.65px;width:4px;height:4px;border-radius:50%;background:#1a1a1a"></div>
<div class="a" style="left:685.7px;top:107.4px;width:4px;height:4px;border-radius:50%;background:#1a1a1a"></div>
<div class="a" style="left:685.7px;top:167.15px;width:4px;height:4px;border-radius:50%;background:#1a1a1a"></div>
<div class="a" style="left:685.7px;top:209.65px;width:4px;height:4px;border-radius:50%;background:#1a1a1a"></div>
<!-- left toolbar icons -->
<svg class="a" style="left:203.5px;top:671px" width="8" height="12" viewBox="0 0 8 12"><path d="M4 11V1.2M1 4.2L4 1.2L7 4.2" stroke="#b8bbc0" stroke-width="1" fill="none"/></svg>
<svg class="a" style="left:226px;top:671px" width="8" height="12" viewBox="0 0 8 12"><path d="M4 1V10.8M1 7.8L4 10.8L7 7.8" stroke="#b8bbc0" stroke-width="1" fill="none"/></svg>
<div class="a" style="left:243.2px;top:671px;width:14px;height:12.7px;border:1px solid #6a6a6a;background:#fff"></div>
<div class="a" style="left:276px;top:672px;width:1px;height:12px;background:#d8dadd"></div>
<div class="a" style="left:288.5px;top:677px;width:7.5px;height:1px;background:#666"></div>
<svg class="a" style="left:310px;top:674px" width="10" height="7" viewBox="0 0 10 7"><path d="M0.8 3.5H9.2M2.8 1.2L0.8 3.5L2.8 5.8M7.2 1.2L9.2 3.5L7.2 5.8" stroke="#555" stroke-width="1" fill="none"/></svg>
<svg class="a" style="left:333.5px;top:673.5px" width="8" height="8" viewBox="0 0 8 8"><path d="M4 0.3V7.7M0.3 4H7.7" stroke="#555" stroke-width="1"/></svg>
<div class="a" style="left:353.5px;top:672px;width:1px;height:12px;background:#d8dadd"></div>
<div class="a" style="left:361px;top:668.3px;width:18px;height:18.4px;background:#cfdcf6;border:1px solid #a4b9ea;border-radius:4.5px"></div>
<svg class="a" style="left:365.5px;top:674px" width="10" height="8" viewBox="0 0 10 8"><path d="M0.5 2.8H8.5M0.8 2.8L2.8 0.8M0.5 4.8H8.5M8.2 4.8L6.2 6.8" stroke="#333" stroke-width="1.1" fill="none"/></svg>
<!-- right toolbar icons -->
<svg class="a" style="left:780px;top:671px" width="8" height="12" viewBox="0 0 8 12"><path d="M4 11V1.2M1 4.2L4 1.2L7 4.2" stroke="#b8bbc0" stroke-width="1" fill="none"/></svg>
<svg class="a" style="left:802.5px;top:671px" width="8" height="12" viewBox="0 0 8 12"><path d="M4 1V10.8M1 7.8L4 10.8L7 7.8" stroke="#b8bbc0" stroke-width="1" fill="none"/></svg>
<div class="a" style="left:820px;top:671px;width:14px;height:12.7px;border:1px solid #6a6a6a;background:#fff"></div>
<div class="a" style="left:852.5px;top:672px;width:1px;height:12px;background:#d8dadd"></div>
<div class="a" style="left:865px;top:677px;width:7.5px;height:1px;background:#666"></div>
<svg class="a" style="left:886.5px;top:674px" width="10" height="7" viewBox="0 0 10 7"><path d="M0.8 3.5H9.2M2.8 1.2L0.8 3.5L2.8 5.8M7.2 1.2L9.2 3.5L7.2 5.8" stroke="#555" stroke-width="1" fill="none"/></svg>
<svg class="a" style="left:910px;top:673.5px" width="8" height="8" viewBox="0 0 8 8"><path d="M4 0.3V7.7M0.3 4H7.7" stroke="#555" stroke-width="1"/></svg>
<div class="a" style="left:930px;top:672px;width:1px;height:12px;background:#d8dadd"></div>
<div class="a" style="left:937.5px;top:668.3px;width:18px;height:18.4px;background:#cfdcf6;border:1px solid #a4b9ea;border-radius:4.5px"></div>
<svg class="a" style="left:942px;top:674px" width="10" height="8" viewBox="0 0 10 8"><path d="M0.5 2.8H8.5M0.8 2.8L2.8 0.8M0.5 4.8H8.5M8.2 4.8L6.2 6.8" stroke="#333" stroke-width="1.1" fill="none"/></svg>
<div class="t" style="left:245px;top:673.5px;font-size:9px;line-height:9px;color:#333;-webkit-text-stroke:0">1</div>
<div class="t" style="left:259px;top:673.5px;font-size:9px;line-height:9px;color:#444;-webkit-text-stroke:0">/ 1</div>
<div class="t" style="left:822px;top:673.5px;font-size:9px;line-height:9px;color:#333;-webkit-text-stroke:0">1</div>
<div class="t" style="left:836px;top:673.5px;font-size:9px;line-height:9px;color:#444;-webkit-text-stroke:0">/ 1</div>
</body></html>
